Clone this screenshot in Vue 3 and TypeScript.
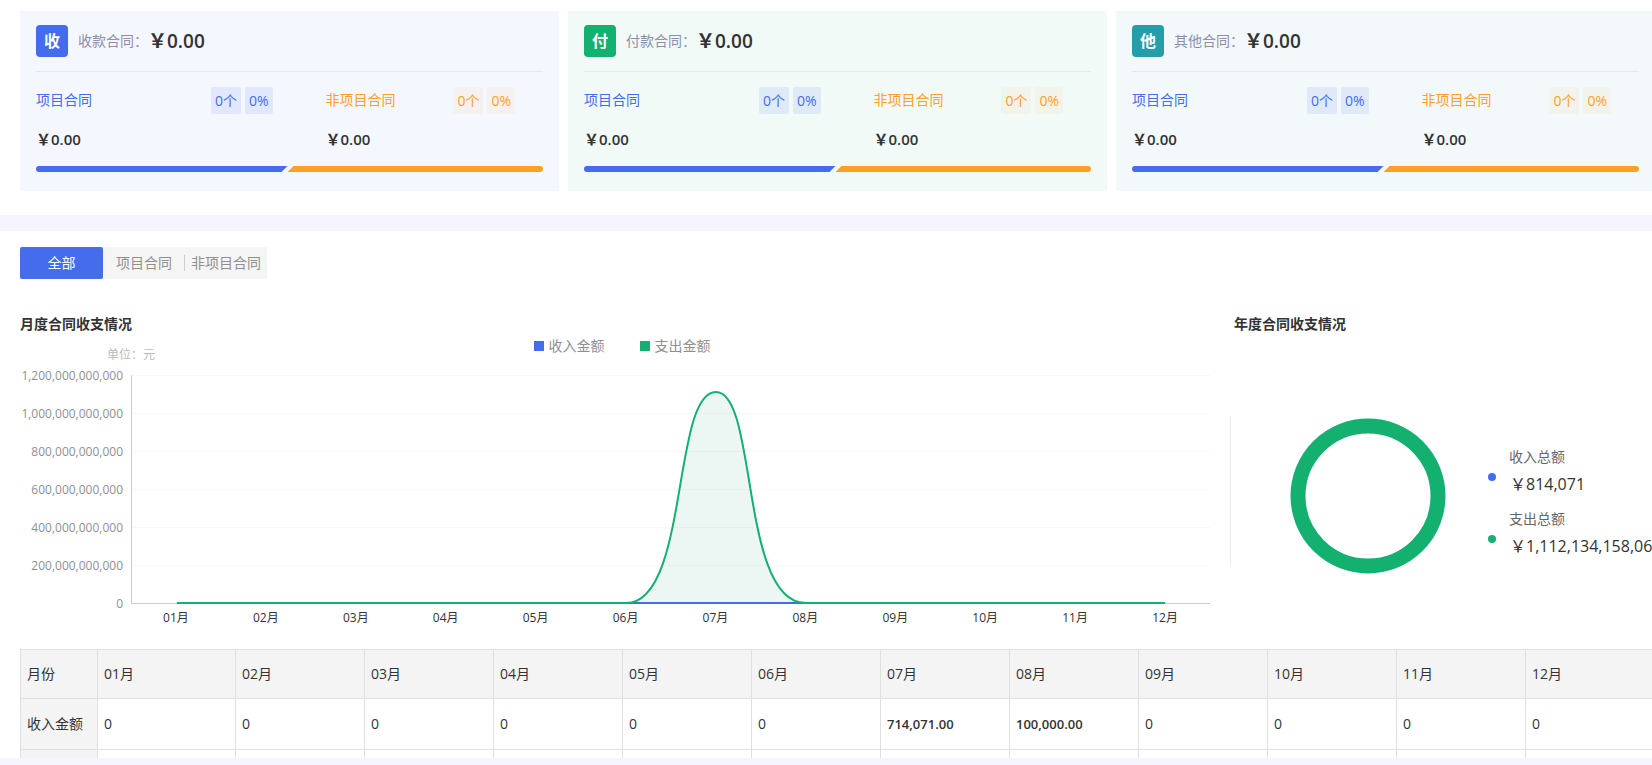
<script setup lang="ts">
import { ref } from 'vue'

interface Part { label: string; count: string; percent: string; amount: string; tone: string }
interface Card { mark: string; label: string; amount: string; theme: string }

const cards: Card[] = [
  { mark: '收', label: '收款合同：', amount: '￥0.00', theme: 'income' },
  { mark: '付', label: '付款合同：', amount: '￥0.00', theme: 'expense' },
  { mark: '他', label: '其他合同：', amount: '￥0.00', theme: 'other' },
]

const parts: Part[] = [
  { label: '项目合同', count: '0个', percent: '0%', amount: '￥0.00', tone: 'blue' },
  { label: '非项目合同', count: '0个', percent: '0%', amount: '￥0.00', tone: 'orange' },
]

const tabs = ['全部', '项目合同', '非项目合同']
const activeTab = ref(0)

const months = Array.from({ length: 12 }, (_, i) => String(i + 1).padStart(2, '0') + '月')
const ticks = [
  '1,200,000,000,000', '1,000,000,000,000', '800,000,000,000',
  '600,000,000,000', '400,000,000,000', '200,000,000,000', '0',
]

const income = months.map((_, i) => (i === 6 ? '714,071.00' : i === 7 ? '100,000.00' : '0'))

const totals = [
  { label: '收入总额', amount: '￥814,071', tone: 'blue' },
  { label: '支出总额', amount: '￥1,112,134,158,06', tone: 'green' },
]

const curve = 'M495 228 C558 228 541 17 585 17 C627 17 609 228 675 228'
</script>

<template>
  <div class="page">
    <section class="summary">
      <div class="cards">
        <article v-for="card in cards" :key="card.mark" class="card" :class="card.theme">
          <header class="card-head">
            <span class="mark">{{ card.mark }}</span>
            <span class="card-label">{{ card.label }}</span>
            <strong class="card-amount">{{ card.amount }}</strong>
          </header>
          <div class="parts">
            <div v-for="part in parts" :key="part.label" class="part" :class="part.tone">
              <div class="part-head">
                <span class="part-label">{{ part.label }}</span>
                <span class="badge">{{ part.count }}</span>
                <span class="badge">{{ part.percent }}</span>
              </div>
              <strong class="part-amount">{{ part.amount }}</strong>
            </div>
          </div>
          <div class="bar"><span class="bar-left"></span><span class="bar-right"></span></div>
        </article>
      </div>
    </section>

    <section class="detail">
      <div class="tabs">
        <template v-for="(tab, i) in tabs" :key="tab">
          <span v-if="i === 2" class="tab-line"></span>
          <button type="button" class="tab" :class="{ active: activeTab === i }" @click="activeTab = i">{{ tab }}</button>
        </template>
      </div>

      <div class="charts">
        <div class="monthly">
          <h2>月度合同收支情况</h2>
          <div class="chart-head">
            <span class="unit">单位：元</span>
            <div class="legend">
              <span class="legend-item blue"><i></i>收入金额</span>
              <span class="legend-item green"><i></i>支出金额</span>
            </div>
          </div>
          <div class="chart">
            <div class="y-axis"><span v-for="t in ticks" :key="t">{{ t }}</span></div>
            <div class="plot-area">
              <svg class="plot" viewBox="0 0 1080 228" preserveAspectRatio="none" aria-hidden="true">
                <line v-for="n in 6" :key="n" class="grid-line" x1="0" x2="1080" :y1="(n - 1) * 38 + 0.5" :y2="(n - 1) * 38 + 0.5" />
                <path class="fill" :d="curve + ' Z'" />
                <path class="line blue-line" d="M45 228 H1035" />
                <path class="line green-line" d="M45 228 H495" />
                <path class="line green-line" d="M675 228 H1035" />
                <path class="line green-line" :d="curve" />
              </svg>
              <div class="x-axis"><span v-for="m in months" :key="m">{{ m }}</span></div>
            </div>
          </div>
        </div>

        <div class="annual">
          <h2>年度合同收支情况</h2>
          <div class="annual-body">
            <svg class="donut" viewBox="0 0 160 160" aria-hidden="true">
              <circle cx="80" cy="80" r="70" />
            </svg>
            <ul class="totals">
              <li v-for="t in totals" :key="t.label" :class="t.tone">
                <i></i>
                <div><span class="total-label">{{ t.label }}</span><span class="total-amount">{{ t.amount }}</span></div>
              </li>
            </ul>
          </div>
        </div>
      </div>

      <div class="table-wrap">
        <table>
          <colgroup>
            <col class="col-head"><col class="col-first"><col v-for="n in 11" :key="n">
          </colgroup>
          <thead>
            <tr><th scope="col">月份</th><th v-for="m in months" :key="m" scope="col">{{ m }}</th></tr>
          </thead>
          <tbody>
            <tr>
              <th scope="row">收入金额</th>
              <td v-for="(v, i) in income" :key="i"><b v-if="v !== '0'">{{ v }}</b><template v-else>0</template></td>
            </tr>
            <tr>
              <th></th>
              <td v-for="m in months" :key="m"></td>
            </tr>
          </tbody>
        </table>
      </div>
    </section>
  </div>
</template>

<style>
body { margin: 0; }
</style>

<style scoped>
* { box-sizing: border-box; }
.page {
  --blue: #446ced;
  --green: #13b070;
  --orange: #ff9f26;
  display: flex;
  flex-direction: column;
  gap: 16px;
  height: 100vh;
  padding-bottom: 7px;
  overflow: hidden;
  background: #f4f5fe;
  color: #333;
  font: 14px/20px "Open Sans", "Noto Sans CJK SC", sans-serif;
}
.summary { flex: none; padding: 11px 0 24px 20px; background: #fff; }
.cards { display: grid; grid-template-columns: repeat(3, 1fr); gap: 9px; margin-right: -3px; }
.card { padding: 14px 16px 19px; }
.card.income { background: #f5f7fe; --mark: #446ced; }
.card.expense { background: #f2faf8; --mark: #13b070; }
.card.other { background: #f3f9fa; --mark: #259ea9; }
.card-head { display: flex; align-items: center; height: 47px; padding-bottom: 14px; border-bottom: 1px solid #e4e8ee; }
.mark {
  width: 32px; height: 32px; border-radius: 4px; background: var(--mark);
  color: #fff; font-size: 16px; font-weight: 700; line-height: 32px; text-align: center;
}
.card-label { width: 70px; margin-left: 10px; color: #8a90ab; }
.card-amount { font-size: 19px; font-weight: 600; }
.parts { display: grid; grid-template-columns: 1fr 1fr; padding-top: 15px; }
.part.blue { padding-right: 17px; --tone: #446ced; --tint: rgba(68, 108, 237, 0.11); }
.part.orange { padding: 0 28px 0 36px; --tone: #ff9f26; --tint: rgba(255, 159, 38, 0.06); }
.part-head { display: flex; gap: 4px; align-items: flex-start; height: 27px; color: var(--tone); }
.part-label { flex: 1; line-height: 25px; }
.badge { padding: 0 4px; border-radius: 2px; background: var(--tint); line-height: 27px; }
.part-amount { display: block; margin-top: 15px; font-size: 15px; font-weight: 600; }
.bar { display: flex; height: 6px; margin-top: 17px; }
.bar-left { flex: 0 0 calc(50% - 2px); border-radius: 3px 0 0 3px; background: var(--blue); clip-path: polygon(0 0, 100% 0, calc(100% - 6px) 100%, 0 100%); }
.bar-right { flex: 1; border-radius: 0 3px 3px 0; background: var(--orange); clip-path: polygon(6px 0, 100% 0, 100% 100%, 0 100%); }

.detail { flex: 1; min-height: 0; padding: 16px 0 0 20px; overflow: hidden; background: #fff; }
.tabs { display: inline-flex; align-items: center; background: #f5f5f5; vertical-align: top; }
.tab { height: 32px; padding: 0 12px 0 13px; border: 0; border-radius: 2px; background: none; color: #909090; font: inherit; cursor: pointer; }
.tab.active { width: 83px; padding: 0; background: var(--blue); color: #fff; }
.tab-line { width: 1px; height: 16px; background: #ccc; }
.tab-line + .tab { padding: 0 6px; }
.charts { display: grid; grid-template-columns: minmax(0, 1fr) 422px; margin-top: 35px; }
h2 { margin: 0; font-size: 14px; font-weight: 600; line-height: 20px; }
.chart-head { display: grid; height: 41px; padding-right: 6px; }
.unit { grid-area: 1 / 1; margin: 11px 0 0 87px; color: #bbb; font-size: 12px; }
.legend { display: flex; grid-area: 1 / 1; justify-content: center; gap: 35px; padding-top: 2px; }
.legend-item { display: flex; align-items: center; gap: 5px; height: 20px; color: #909090; }
.legend-item i { width: 10px; height: 10px; background: var(--blue); }
.legend-item.green i { background: var(--green); }
.chart { display: flex; align-items: flex-start; padding-right: 20px; }
.y-axis { display: flex; flex: none; flex-direction: column; justify-content: space-between; width: 103px; height: 244px; margin: -7px 8px -9px 0; color: #909090; font-size: 12px; line-height: 16px; text-align: right; }
.plot-area { flex: 1; min-width: 0; }
.plot { display: block; width: 100%; height: 229px; border-bottom: 1px solid #ccc; border-left: 1px solid #ccc; overflow: visible; }
.grid-line { stroke: #f8f8f8; }
.fill { fill: #10966a; fill-opacity: 0.08; }
.line { fill: none; stroke-width: 2; vector-effect: non-scaling-stroke; }
.blue-line { stroke: #446ced; }
.green-line { stroke: #13b070; }
.x-axis { display: grid; grid-template-columns: repeat(12, 1fr); padding-top: 6px; font-size: 12px; line-height: 16px; text-align: center; }

.annual { min-width: 0; }
.annual h2 { padding-left: 4px; }
.annual-body { display: flex; align-items: flex-start; height: 151px; margin-top: 82px; border-left: 1px solid #eee; }
.donut { flex: none; width: 160px; height: 160px; margin-left: 57px; }
.donut circle { fill: none; stroke: #13b070; stroke-width: 15; }
.totals { display: flex; flex-direction: column; gap: 8px; margin: 28px 0 0 40px; padding: 0; list-style: none; white-space: nowrap; }
.totals li { display: flex; gap: 13px; line-height: 28px; }
.totals i { flex: none; width: 8px; height: 8px; margin-top: 29px; border-radius: 50%; background: var(--blue); }
.totals .green i { background: var(--green); }
.total-label { display: block; color: #666; line-height: 26px; }
.total-amount { display: block; padding-left: 1px; font-size: 16px; }

.table-wrap { margin: 23px -3px 0 0; }
table { width: 100%; border-collapse: collapse; table-layout: fixed; }
.col-head { width: 77px; }
.col-first { width: 138px; }
th, td { height: 51px; padding: 0 6px; border: 1px solid #e0e0e0; font-weight: 400; text-align: left; white-space: nowrap; }
th { background: #f4f4f4; }
thead th { height: 49px; }
td b { font-size: 13px; font-weight: 600; }
</style>
